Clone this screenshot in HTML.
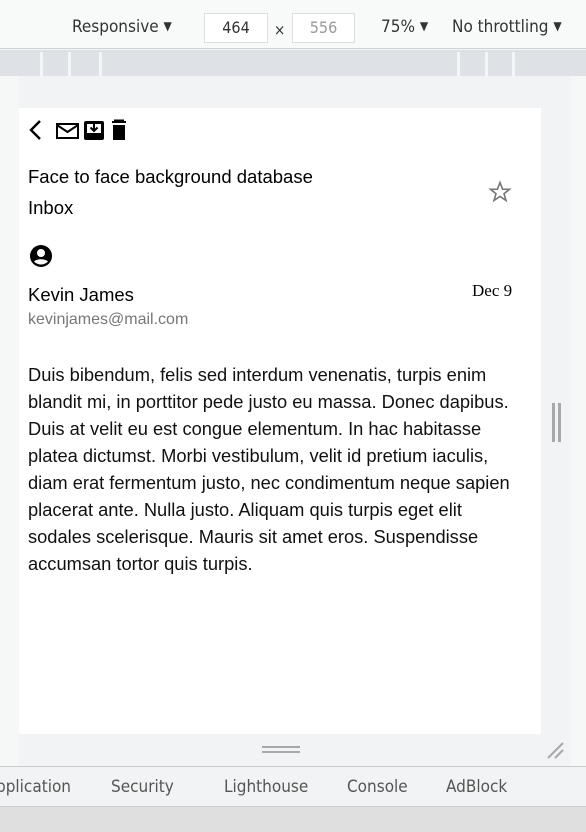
<!DOCTYPE html>
<html><head><meta charset="utf-8"><style>
*{margin:0;padding:0;box-sizing:border-box}
body{width:586px;height:832px;position:relative;overflow:hidden;background:#f1f3f4;font-family:"Liberation Sans",Arial,sans-serif}
.abs{position:absolute}
#tb{left:0;top:0;width:586px;height:49px;background:#f8f9f9;border-bottom:1px solid #cfd2d6}
#tb span{position:absolute;top:17px;font-size:17px;color:#333;font-family:"DejaVu Sans Condensed","Liberation Sans",sans-serif}
#tb b{font-weight:normal;font-size:12px;position:relative;top:-2px}
.inp{position:absolute;top:13px;height:30px;background:#fff;border:1px solid #ddd;font-size:16px;text-align:center;line-height:28px;font-family:"DejaVu Sans Condensed","Liberation Sans",sans-serif}
#ruler{left:0;top:50px;width:586px;height:26px;background:#dee1e6}
#ruler i{position:absolute;top:2px;width:3px;height:24px;background:#f4f5f7}
#left{left:0;top:76px;width:19px;height:690px;background:#f6f7f7}
#panel{left:19px;top:108px;width:522px;height:626px;background:#fff}
#rstrip{left:571px;top:76px;width:15px;height:690px;background:#f6f7f7}
.t{position:absolute;color:#000}
#tabs{left:0;top:766px;width:586px;height:41px;background:#f1f3f4;border-top:1px solid #ccc;border-bottom:1px solid #ccc}
#tabs span{position:absolute;top:10px;font-size:17px;color:#555;font-family:"DejaVu Sans Condensed","Liberation Sans",sans-serif}
#bot{left:0;top:807px;width:586px;height:25px;background:#dfdfdf}
</style></head><body>
<div id="tb" class="abs">
<span style="left:72px">Responsive <b>▼</b></span>
<div class="inp" style="left:204px;width:64px;color:#333">464</div>
<span style="left:274px;top:21px;font-size:15px">×</span>
<div class="inp" style="left:292px;width:63px;color:#999">556</div>
<span style="left:381px">75% <b>▼</b></span>
<span style="left:452px">No throttling <b>▼</b></span>
</div>
<div id="ruler" class="abs"><i style="left:40px"></i><i style="left:68px"></i><i style="left:99px"></i><i style="left:457px"></i><i style="left:485px"></i><i style="left:512px"></i></div>
<div id="left" class="abs"></div>
<div id="rstrip" class="abs"></div>
<div class="abs" style="left:552px;top:403px;width:3px;height:39px;background:#a8a8a8"></div>
<div class="abs" style="left:558px;top:403px;width:3px;height:39px;background:#a8a8a8"></div>
<div class="abs" style="left:262px;top:746px;width:38px;height:2px;background:#a8a8a8"></div>
<div class="abs" style="left:262px;top:751px;width:38px;height:2px;background:#a8a8a8"></div>
<svg class="abs" style="left:546px;top:740px" width="20" height="20"><path d="M2 18L17 3M9 18L17 10" stroke="#a8a8a8" stroke-width="2"/></svg>
<div id="panel" class="abs">
<svg class="abs" style="left:8px;top:11px" width="112" height="22">
<path d="M13 2L4 11L13 20" stroke="#000" stroke-width="2.4" fill="none"/>
<rect x="30" y="5" width="21" height="14" stroke="#000" stroke-width="2" fill="none"/>
<path d="M30 6L40.5 13L51 6" stroke="#000" stroke-width="2" fill="none"/>
<rect x="57" y="2" width="20" height="19" rx="2" fill="#000"/>
<rect x="60" y="5" width="14" height="9" fill="#fff"/>
<path d="M67 5V11M63.5 8.5L67 12L70.5 8.5" stroke="#000" stroke-width="2" fill="none"/>
<path d="M85 3H99M88 3V1.5H96V3" stroke="#000" stroke-width="2" fill="none"/>
<path d="M86 6H98V21H86Z" fill="#000"/>
</svg>
<div class="t" style="left:9px;top:58px;font-size:18.5px">Face to face background database</div>
<div class="t" style="left:9px;top:89px;font-size:18.5px">Inbox</div>
<svg class="abs" style="left:469px;top:72px" width="24" height="24"><path d="M12 2.5L14.6 9.2L21.5 9.3L16 13.7L18 20.5L12 16.5L6 20.5L8 13.7L2.5 9.3L9.4 9.2Z" stroke="#777" stroke-width="1.6" fill="none"/></svg>
<svg class="abs" style="left:10px;top:136px" width="24" height="24"><circle cx="12" cy="12" r="11" fill="#000"/><circle cx="12" cy="9" r="4" fill="#fff"/><path d="M5 17.5C8 14.5 16 14.5 19 17.5C17 19.5 14.5 20.5 12 20.5C9.5 20.5 7 19.5 5 17.5Z" fill="#fff"/></svg>
<div class="t" style="left:9px;top:176px;font-size:18.5px">Kevin James</div>
<div class="t" style="left:453px;top:173px;font-size:17px;font-family:'Liberation Serif',serif">Dec 9</div>
<div class="t" style="left:9px;top:203px;font-size:16px;color:#777">kevinjames@mail.com</div>
<div class="t" style="left:9px;top:253px;width:488px;font-size:18.3px;line-height:27px;color:#111">Duis bibendum, felis sed interdum venenatis, turpis enim blandit mi, in porttitor pede justo eu massa. Donec dapibus. Duis at velit eu est congue elementum. In hac habitasse platea dictumst. Morbi vestibulum, velit id pretium iaculis, diam erat fermentum justo, nec condimentum neque sapien placerat ante. Nulla justo. Aliquam quis turpis eget elit sodales scelerisque. Mauris sit amet eros. Suspendisse accumsan tortor quis turpis.</div>
</div>
<div id="tabs" class="abs">
<span style="left:-4px">pplication</span>
<span style="left:111px">Security</span>
<span style="left:224px">Lighthouse</span>
<span style="left:347px">Console</span>
<span style="left:446px">AdBlock</span>
</div>
<div id="bot" class="abs"></div>
</body></html>
